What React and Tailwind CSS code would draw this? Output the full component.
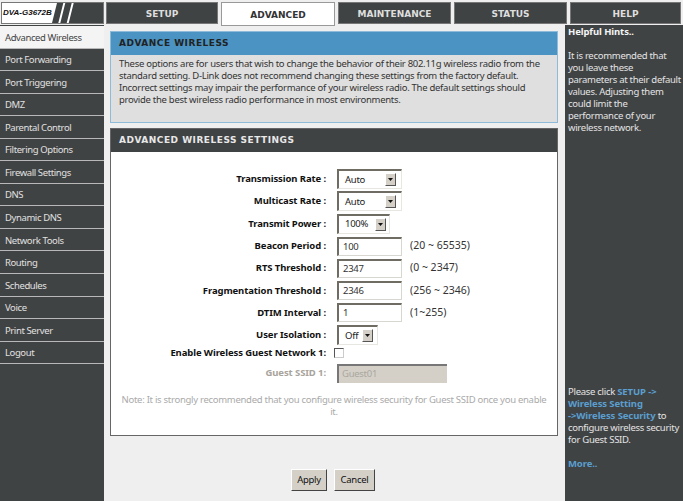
const side = ["Advanced Wireless","Port Forwarding","Port Triggering","DMZ","Parental Control","Filtering Options","Firewall Settings","DNS","Dynamic DNS","Network Tools","Routing","Schedules","Voice","Print Server","Logout"];
const tabs = [["SETUP","w-[112px]"],["ADVANCED","w-[114px]"],["MAINTENANCE","w-[113px]"],["STATUS","w-[113px]"],["HELP","w-[111px]"]];

function Sel({ v, w, mr }) {
  return (
    <div className={`flex items-center justify-between h-[20px] bg-white border-t-2 border-l-2 border-t-[#6f6c64] border-l-[#6f6c64] border-r border-b border-r-[#e8e6e0] border-b-[#e8e6e0] ${w}`}>
      <span className="pl-[6px] text-[#222]">{v}</span>
      <span className={`${mr} w-[11px] h-[13px] bg-[#d4d0c8] border-t border-l border-t-white border-l-white border-r border-b border-r-[#555] border-b-[#555] flex items-center justify-center`}>
        <svg width="5" height="3" viewBox="0 0 5 3"><path d="M0 0h5L2.5 3z" fill="#111" /></svg>
      </span>
    </div>
  );
}
function Inp({ v }) {
  return <div className="w-[65px] h-[19px] bg-white border-t-2 border-l-2 border-t-[#6f6c64] border-l-[#6f6c64] border-r border-b border-r-[#d8d6d0] border-b-[#d8d6d0] pl-[4px] leading-[16px] text-[#333]">{v}</div>;
}
function Row({ label, children, hint, dim, h = "h-[22.3px]" }) {
  return (
    <div className={`flex items-center ${h}`}>
      <div className={`w-[215px] text-right font-bold text-[9.5px] tracking-[-0.1px] ${dim ? "text-[#a8a49c]" : "text-[#111]"}`}>{label}</div>
      <div className="ml-[11px] flex items-center">{children}</div>
      {hint && <span className="ml-[8px] text-[10.5px] tracking-normal text-[#333]">{hint}</span>}
    </div>
  );
}
function Btn({ children, w }) {
  return <div className={`${w} h-[22px] bg-[#d4d0c8] border border-t-white border-l-white border-r-[#444] border-b-[#444] text-[#111] flex items-center justify-center`}>{children}</div>;
}

export default function App() {
  return (
    <div className="w-[683px] h-[501px] overflow-hidden bg-[#efefef] flex flex-col font-['Noto_Sans',sans-serif] text-[9.5px] tracking-[-0.28px]">
      <div className="flex h-[25px] shrink-0 pt-[2px] relative z-10 tracking-normal">
        <div className="w-[103px] ml-[1px] h-[22px] bg-[#404344] border border-[#777] flex overflow-hidden">
          <div className="w-[50px] bg-white font-['Liberation_Sans',sans-serif] text-[8px] font-bold italic text-[#111] leading-[19px] pl-[1px] whitespace-nowrap">DVA-G3672B</div>
          <svg width="22" height="20" viewBox="0 0 22 20"><path d="M0 20V0h5L0 20zM6.3 20L11.3 0h2L8.3 20zM14.7 20L19.7 0h2L16.7 20z" fill="#fff" /></svg>
        </div>
        <div className="flex ml-[2px] gap-[3px]">
          {tabs.map(([t, w]) => (
            <div key={t} className={`${w} ${t === "ADVANCED" ? "h-[24px] bg-white text-[#333] border-[#999]" : "h-[22px] bg-[#404344] text-[#dedede] border-[#777]"} border pt-[4px] flex items-center justify-center font-['DejaVu_Sans',sans-serif] font-bold text-[9px]`}>{t}</div>
          ))}
        </div>
      </div>
      <div className="flex flex-1 min-h-0">
        <div className="w-[104px] shrink-0 bg-[#404344] pt-px tracking-[-0.4px]">
          {side.map((s, i) => (
            <div key={s} className={`h-[22.55px] pl-[5px] pt-[2px] flex items-center border-b border-b-[#b8b8b8] ${i === 0 ? "bg-[#f4f4f4] text-[#444]" : "text-[#e0e0e0]"}`}>{s}</div>
          ))}
        </div>
        <div className="flex-1 px-[6px] pt-[6px]">
          <div className="w-[448px] border border-[#8fbbd9] bg-[#dfdfdf] h-[92px]">
            <div className="h-[23px] bg-[#4a93c3] pl-[8px] flex items-center font-['DejaVu_Sans',sans-serif] font-bold text-[9px] tracking-[0.5px] text-[#222]">ADVANCE WIRELESS</div>
            <div className="px-[8px] pt-[3px] leading-[12px] text-[#333] whitespace-nowrap">These options are for users that wish to change the behavior of their 802.11g wireless radio from the<br />standard setting. D-Link does not recommend changing these settings from the factory default.<br />Incorrect settings may impair the performance of your wireless radio. The default settings should<br />provide the best wireless radio performance in most environments.</div>
          </div>
          <div className="w-[448px] mt-[5px] border border-[#666] bg-white h-[308px]">
            <div className="h-[23px] bg-[#404344] pl-[8px] flex items-center font-['DejaVu_Sans',sans-serif] font-bold text-[9px] tracking-[0.5px] text-[#e8e8e8]">ADVANCED WIRELESS SETTINGS</div>
            <div className="pt-[16px]">
              <Row label="Transmission Rate :"><Sel v="Auto" w="w-[65px]" mr="mr-[5px]" /></Row>
              <Row label="Multicast Rate :"><Sel v="Auto" w="w-[65px]" mr="mr-[5px]" /></Row>
              <Row label="Transmit Power :"><Sel v="100%" w="w-[53px]" mr="mr-[3px]" /></Row>
              <Row label="Beacon Period :" hint="(20 ~ 65535)"><Inp v="100" /></Row>
              <Row label="RTS Threshold :" hint="(0 ~ 2347)"><Inp v="2347" /></Row>
              <Row label="Fragmentation Threshold :" hint="(256 ~ 2346)"><Inp v="2346" /></Row>
              <Row label="DTIM Interval :" hint="(1~255)"><Inp v="1" /></Row>
              <Row label="User Isolation :"><Sel v="Off" w="w-[41px]" mr="mr-[4px]" /></Row>
              <Row h="h-[14px]" label="Enable Wireless Guest Network 1:"><div className="w-[10px] h-[10px] -ml-[3px] bg-white border border-[#555] border-r-[#ccc] border-b-[#ccc]" /></Row>
              <Row h="h-[26px]" label="Guest SSID 1:" dim><div className="w-[110px] h-[19px] bg-[#d4d0c8] border-t-2 border-l-2 border-t-[#777] border-l-[#777] pl-[3px] leading-[16px] text-[#aaa79f]">Guest01</div></Row>
              <div className="mt-[8px] text-center leading-[12px] text-[#aaa] whitespace-nowrap">Note: It is strongly recommended that you configure wireless security for Guest SSID once you enable<br />it.</div>
            </div>
          </div>
          <div className="w-[448px] mt-[33px] flex justify-center gap-[7px] pr-[2px]">
            <Btn w="w-[36px]">Apply</Btn>
            <Btn w="w-[41px]">Cancel</Btn>
          </div>
        </div>
        <div className="w-[118px] shrink-0 bg-[#404344] text-[#e4e4e4] px-[3px] pt-[1px] leading-[12px] flex flex-col whitespace-nowrap">
          <div className="font-bold text-[#f4f4f4] tracking-[-0.1px]">Helpful Hints..</div>
          <p className="mt-[12px]">It is recommended that<br />you leave these<br />parameters at their default<br />values. Adjusting them<br />could limit the<br />performance of your<br />wireless network.</p>
          <p className="mt-[252px]">Please click <b className="text-[#5a9fd0] tracking-[-0.1px]">SETUP -&gt;<br />Wireless Setting<br />-&gt;Wireless Security</b> to<br />configure wireless security<br />for Guest SSID.</p>
          <p className="mt-[12px] font-bold text-[#5a9fd0] tracking-[-0.1px]">More..</p>
        </div>
      </div>
    </div>
  );
}
